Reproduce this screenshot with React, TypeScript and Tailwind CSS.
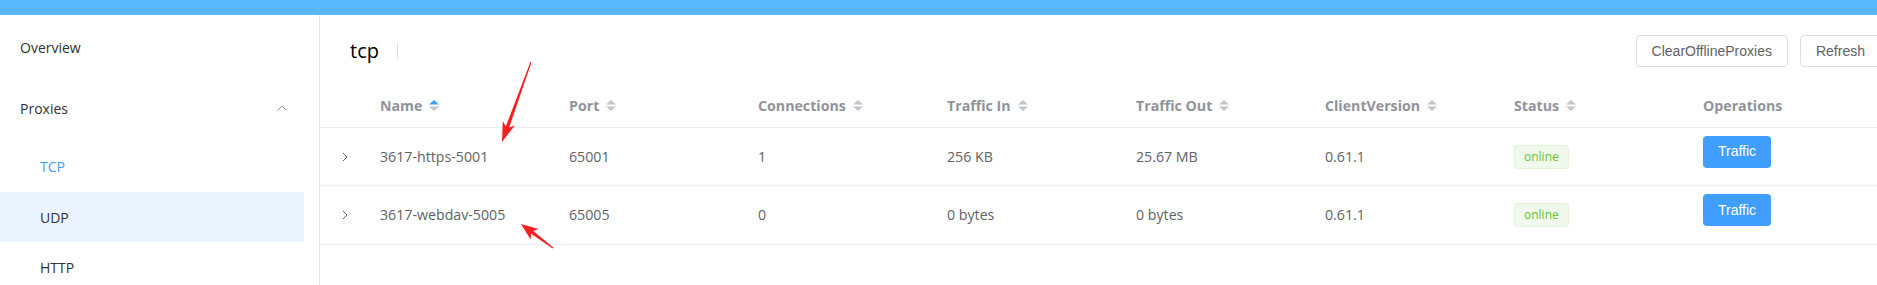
import React from "react";

const cols = [
  { label: "Name", sort: "asc" },
  { label: "Port", sort: "none" },
  { label: "Connections", sort: "none" },
  { label: "Traffic In", sort: "none" },
  { label: "Traffic Out", sort: "none" },
  { label: "ClientVersion", sort: "none" },
  { label: "Status", sort: "none" },
];

const rows = [
  { name: "3617-https-5001", port: "65001", conns: "1", tin: "256 KB", tout: "25.67 MB", ver: "0.61.1", h: "h-[58px]" },
  { name: "3617-webdav-5005", port: "65005", conns: "0", tin: "0 bytes", tout: "0 bytes", ver: "0.61.1", h: "h-[59px]" },
];

function Caret({ active }: { active: boolean }) {
  return (
    <svg width="10" height="11" viewBox="0 0 10 11" className="ml-[7px] shrink-0">
      <polygon points="0,4.6 5,0 10,4.6" fill={active ? "#409eff" : "#c0c4cc"} />
      <polygon points="0,6.4 5,11 10,6.4" fill="#c0c4cc" />
    </svg>
  );
}

export default function App() {
  return (
    <div className="relative w-[1877px] h-[285px] overflow-hidden bg-white font-['Open_Sans',sans-serif]">
      <div className="h-[15px] bg-[#58b7ff]" />
      <div className="flex h-[270px]">
        {/* Sidebar */}
        <div className="w-[320px] shrink-0 border-r border-[#e6e6e6]">
          <div className="w-[304px] pt-[4px] text-[14px] text-[#303133]">
            <div className="h-[56px] flex items-center pl-[20px]">Overview</div>
            <div className="mt-[5px] h-[56px] flex items-center justify-between pl-[20px] pr-[17px]">
              <span>Proxies</span>
              <svg width="10" height="6" viewBox="0 0 10 6">
                <polyline points="0.5,5.5 5,1 9.5,5.5" fill="none" stroke="#909399" strokeWidth="1" />
              </svg>
            </div>
            <div className="mt-[5px]">
              <div className="h-[50px] flex items-center pl-[40px] text-[#409eff]">TCP</div>
              <div className="h-[50px] flex items-center pl-[40px] bg-[#ecf5ff] mt-px">UDP</div>
              <div className="h-[50px] flex items-center pl-[40px]">HTTP</div>
            </div>
          </div>
        </div>

        {/* Main */}
        <div className="flex-1 min-w-0">
          <div className="pt-[20px] flex items-center justify-between">
            <div className="flex items-center pl-[30px]">
              <span className="text-[20px] text-black leading-[32px]">tcp</span>
              <span className="ml-[18px] w-px h-[16px] bg-[#dcdfe6]" />
            </div>
            <div className="flex items-center gap-[12px] -mr-[4px] font-['Liberation_Sans',Arial,sans-serif] text-[14px] text-[#606266]">
              <button className="h-[32px] px-[15px] border border-[#dcdfe6] rounded-[4px] bg-white">ClearOfflineProxies</button>
              <button className="h-[32px] px-[15px] border border-[#dcdfe6] rounded-[4px] bg-white">Refresh</button>
            </div>
          </div>

          <div className="mt-[20px] text-[14.2px]">
            <div className="grid grid-cols-[50px_repeat(7,189px)_1fr] h-[41px] pb-[2px] border-b border-[#ebeef5] items-center text-[#909399] font-bold">
              <div />
              {cols.map((c) => (
                <div key={c.label} className="pl-[10px] flex items-center whitespace-nowrap">
                  <span>{c.label}</span>
                  <Caret active={c.sort === "asc"} />
                </div>
              ))}
              <div className="pl-[10px]">Operations</div>
            </div>
            {rows.map((r) => (
              <div key={r.name} className={`grid grid-cols-[50px_repeat(7,189px)_1fr] ${r.h} border-b border-[#ebeef5] items-center text-[#606266]`}>
                <div className="flex justify-center">
                  <svg width="6" height="10" viewBox="0 0 6 10">
                    <polyline points="1,1 5,5 1,9" fill="none" stroke="#606266" strokeWidth="1" />
                  </svg>
                </div>
                <div className="pl-[10px] whitespace-nowrap">{r.name}</div>
                <div className="pl-[10px]">{r.port}</div>
                <div className="pl-[10px]">{r.conns}</div>
                <div className="pl-[10px]">{r.tin}</div>
                <div className="pl-[10px]">{r.tout}</div>
                <div className="pl-[10px]">{r.ver}</div>
                <div className="pl-[10px] flex">
                  <span className="h-[24px] px-[9px] flex items-center border border-[#e1f3d8] bg-[#f0f9eb] text-[#67c23a] text-[12px] rounded-[4px]">online</span>
                </div>
                <div className="pl-[10px] flex">
                  <button className="mb-[10px] h-[32px] px-[15px] rounded-[4px] bg-[#409eff] text-white font-['Liberation_Sans',Arial,sans-serif] text-[14px]">Traffic</button>
                </div>
              </div>
            ))}
          </div>
        </div>
      </div>

      {/* red annotation arrows */}
      <svg className="absolute inset-0 pointer-events-none" width="1877" height="285" viewBox="0 0 1877 285">
        <polygon
          points="531.5,62.2 509.2,127.6 514.8,125.4 502,142 502.8,121.0 505.8,126.4 530.5,61.8"
          fill="#f41f1f"
        />
        <polygon
          points="553.3,247.6 533.3,231.0 538.6,229.0 521,224 530.6,239.4 531.1,233.8 552.7,248.4"
          fill="#f41f1f"
        />
      </svg>
    </div>
  );
}
